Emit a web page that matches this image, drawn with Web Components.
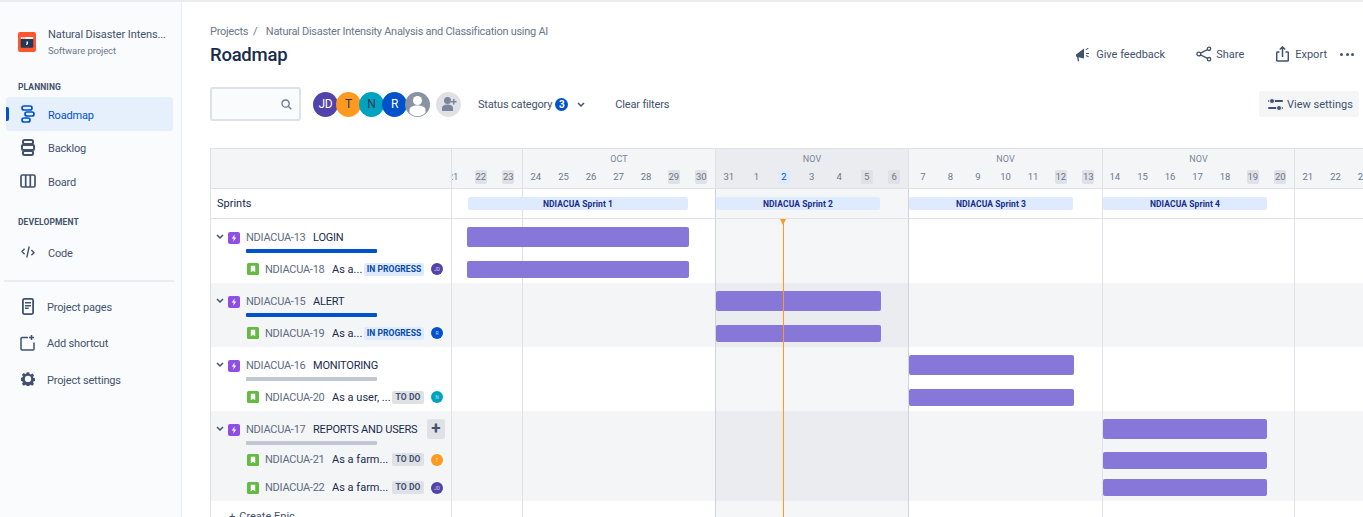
<!DOCTYPE html>
<html>
<head>
<meta charset="utf-8">
<title>Roadmap</title>
<style>
  html, body { margin: 0; height: 517px; overflow: hidden; background: #fff; }
  body { font-family: "Roboto", "Noto Sans", "Liberation Sans", sans-serif; font-size: 11px; color: #172b4d; }
</style>
</head>
<body>
<nd-app>
  <nd-sidebar slot="side"></nd-sidebar>
  <nd-page-header></nd-page-header>
  <nd-filter-bar></nd-filter-bar>
  <nd-roadmap>
    <nd-issue type="epic" key="NDIACUA-13" summary="LOGIN" progress="#0052cc" bar="15,222" h="34"></nd-issue>
    <nd-issue type="story" key="NDIACUA-18" summary="As a..." status="IN PROGRESS" who="JD|#5243aa" bar="15,222" h="30"></nd-issue>
    <nd-issue alt type="epic" key="NDIACUA-15" summary="ALERT" progress="#0052cc" bar="264,165" h="34"></nd-issue>
    <nd-issue alt type="story" key="NDIACUA-19" summary="As a..." status="IN PROGRESS" who="R|#0052cc" bar="264,165" h="30"></nd-issue>
    <nd-issue type="epic" key="NDIACUA-16" summary="MONITORING" progress="#c1c7d0" bar="457,165" h="34"></nd-issue>
    <nd-issue type="story" key="NDIACUA-20" summary="As a user, ..." status="TO DO" who="N|#00a3bf" bar="457,165" h="30"></nd-issue>
    <nd-issue alt add type="epic" key="NDIACUA-17" summary="REPORTS AND USERS" progress="#c1c7d0" bar="651,164" h="34"></nd-issue>
    <nd-issue alt type="story" key="NDIACUA-21" summary="As a farm..." status="TO DO" who="T|#ff991f" bar="651,164" h="27"></nd-issue>
    <nd-issue alt type="story" key="NDIACUA-22" summary="As a farm..." status="TO DO" who="JD|#5243aa" bar="651,164" h="29"></nd-issue>
  </nd-roadmap>
</nd-app>

<script>
const ICONS = {
  roadmap: `<svg width="14" height="18" viewBox="0 0 14 18" fill="none" stroke="currentColor" stroke-width="1.7"><rect x="1" y="1" width="10" height="4" rx="2"/><rect x="4" y="7" width="9" height="4" rx="2"/><rect x="1" y="13" width="8" height="4" rx="2"/></svg>`,
  backlog: `<svg width="14" height="17" viewBox="0 0 14 17" fill="none" stroke="currentColor" stroke-width="2"><rect x="2" y="1" width="10" height="4" rx="1.5"/><rect x="1" y="6" width="12" height="5" rx="1"/><rect x="2" y="12" width="10" height="4" rx="1.5"/></svg>`,
  board: `<svg width="16" height="14" viewBox="0 0 16 14" fill="none" stroke="currentColor" stroke-width="1.7"><rect x="1" y="1" width="14" height="12" rx="1.5"/><path d="M5.7 1v12M10.3 1v12"/></svg>`,
  code: `<svg width="14" height="14" viewBox="0 0 14 14" fill="none" stroke="currentColor" stroke-width="1.4"><path d="M3.6 3.8 1 6.6l2.6 2.6M10.4 5l2.6 2.7-2.6 2.5M8.2 1.5 5.8 12.5"/></svg>`,
  pages: `<svg width="12" height="17" viewBox="0 0 12 17"><rect x=".9" y=".9" width="10.2" height="15.2" rx="1.5" fill="none" stroke="currentColor" stroke-width="1.8"/><path d="M3 4h6v1.6H3zM3 7h6v1.4H3zM3 9.6h3.6V11H3z" fill="currentColor"/></svg>`,
  shortcut: `<svg width="15" height="16" viewBox="0 0 15 16" fill="none" stroke="currentColor" stroke-width="1.5"><path d="M8 2.4H2a1 1 0 0 0-1 1V14a1 1 0 0 0 1 1h11a1 1 0 0 0 1-1V7.5M11.5 0v5M9 2.5h5"/></svg>`,
  gear: `<svg width="14" height="14" viewBox="0 0 16 16"><path fill-rule="evenodd" fill="currentColor" d="M6.6.3h2.8l.4 2 1.3.6 1.8-1.100 2 2-1.100 1.800.6 1.300 2 .4v2.800l-2 .4-.6 1.300 1.100 1.800-2 2-1.800-1.100-1.300.6-.4 2H6.600l-.4-2-1.300-.6-1.800 1.100-2-2 1.100-1.800-.6-1.300-2-.4V6.700l2-.4.6-1.300-1.100-1.800 2-2 1.800 1.100 1.300-.6zM8 4.300a3.600 3.600 0 1 0 0 7.200 3.600 3.600 0 0 0 0-7.200z"/></svg>`,
  search: `<svg width="11" height="11" viewBox="0 0 11 11" fill="none" stroke="#6b778c" stroke-width="1.300"><circle cx="4.600" cy="4.600" r="3.600"/><path d="m7.300 7.300 3 3"/></svg>`,
  megaphone: `<svg width="15" height="17" viewBox="0 0 15 17" fill="#42526e"><path d="M1 8.500 9 2.500v10L3.500 11.200l.7 4H2.800L2 10.800 1 10.500z"/><path d="M10.500 3.500 13 1.800l.5.800-2.500 1.700zM11 7h3v1h-3zM10.800 10l.4-.9 2.600 1.200-.4.900z"/></svg>`,
  share: `<svg width="16" height="16" viewBox="0 0 16 16" fill="none" stroke="#42526e" stroke-width="1.300"><circle cx="2.800" cy="8" r="1.900"/><circle cx="13" cy="2.800" r="1.700"/><circle cx="13" cy="13.200" r="1.700"/><path d="M4.500 7.100 11.500 3.600M4.500 8.900l7 3.500"/></svg>`,
  exportBox: `<svg width="13" height="16" viewBox="0 0 13 16" fill="none" stroke="#42526e" stroke-width="1.500"><path d="M3.500 6H1.500a.8.8 0 0 0-.8.800v7.400a.8.800 0 0 0 .8.800h10a.8.8 0 0 0 .8-.8V6.800a.8.800 0 0 0-.8-.8h-2M6.500 11V1M3.800 3.500 6.500.9l2.700 2.600"/></svg>`,
  sliders: `<svg width="15" height="13" viewBox="0 0 15 13" fill="#42526e"><rect x="0" y="2" width="15" height="2" rx="1"/><rect x="0" y="9" width="15" height="2" rx="1"/><circle cx="4" cy="3" r="2.500" stroke="#f4f5f7"/><circle cx="11" cy="10" r="2.500" stroke="#f4f5f7"/></svg>`,
  chevron: `<svg width="8" height="6" viewBox="0 0 8 6" fill="none" stroke="currentColor" stroke-width="1.500"><path d="m1 1 3 3 3-3"/></svg>`,
  epic: `<svg width="12" height="12" viewBox="0 0 12 12"><rect width="12" height="12" rx="2" fill="#904ee2"/><path d="M6.800 2.300 3.800 6.600h2l-.6 3.100 3-4.300h-2z" fill="#fff"/></svg>`,
  story: `<svg width="12" height="12" viewBox="0 0 12 12"><rect width="12" height="12" rx="1.500" fill="#65ba43"/><path d="M3.800 2.800h4.400v6.400L6 7.700 3.800 9.200z" fill="#fff"/></svg>`,
  project: `<svg width="18" height="20" viewBox="0 0 18 20"><rect width="18" height="20" rx="2" fill="#ff5630"/><rect x="2.700" y="5" width="12.600" height="10.700" rx="1" fill="#253858"/><rect x="2.700" y="5" width="12.600" height="2" fill="#f4f5f7"/><path d="M4 5.500h1.500v1H4z" fill="#ff5630"/><path d="M6 5.500h1.500v1H6z" fill="#ffab00"/><path d="M8.500 9.500H10v3H8.500z" fill="#fff"/><path d="M8 12h1v1H8z" fill="#fff"/></svg>`,
  person: `<svg width="25" height="25" viewBox="0 0 25 25" style="flex:none"><circle cx="12.500" cy="12.500" r="12.500" fill="#8993a4"/><circle cx="12.500" cy="8.500" r="4.500" fill="#fff"/><path d="M4.500 18c0-3 3-4.500 8-4.500s8 1.500 8 4.500v2.700a11 11 0 0 1-16 0z" fill="#fff"/></svg>`,
  addPerson: `<svg width="16" height="16" viewBox="0 0 16 16" fill="#7a869a"><circle cx="6.500" cy="4.500" r="3.500"/><path d="M1 15v-3c0-2 2-3.500 5.500-3.500S12 10 12 12v3z"/><path d="M12 3h1.500v2H15.500v1.400h-2v2H12v-2h-2V5h2z"/></svg>`
};

class NdApp extends HTMLElement {
  constructor() {
    super();
    this.attachShadow({ mode: 'open' }).innerHTML = `
      <style>
        :host { display: flex; height: 515px; border-top: 2px solid #ebecf0; }
        .side { flex: none; width: 182px; display: block; }
        main { flex: 1; min-width: 0; display: flex; flex-direction: column; padding-left: 28px; }
      </style>
      <div class="side"><slot name="side"></slot></div>
      <main><slot></slot></main>
    `;
  }
}

class NdSidebar extends HTMLElement {
  constructor() {
    super();
    this.attachShadow({ mode: 'open' }).innerHTML = `
      <style>
        :host { display: block; width: 181px; height: 515px; background: #fafbfc; border-right: 1px solid #ebecf0; font-size: 11px; color: #42526e; }
        .project { display: flex; gap: 12px; align-items: center; padding: 22px 0 0 18px; height: 36px; }
        .name { font-size: 11px; letter-spacing: -.1px; line-height: 17px; white-space: nowrap; }
        .type { font-size: 9.500px; letter-spacing: -.1px; line-height: 15px; color: #6b778c; }
        h4 { margin: 0; padding-left: 18px; font-size: 8.500px; line-height: 12px; font-weight: 700; letter-spacing: .1px; color: #42526e; }
        .plan { margin-top: 21px; }
        nav { padding: 4px 8px 0 6px; }
        .slim { --item-h: 33.500px; }
        .dev { margin-top: 18px; }
        .code { padding-top: 7px; }
        hr { border: 0; height: 2px; background: #ebecf0; margin: 11px 7px 6px 4px; }
        .tall nd-nav-item { --item-h: 36.500px; --text-x: 41px; }
      </style>
      <div class="project">
        ${ICONS.project}
        <div><div class="name">Natural Disaster Intens...</div><div class="type">Software project</div></div>
      </div>
      <h4 class="plan">PLANNING</h4>
      <nav>
        <nd-nav-item icon="roadmap" active>Roadmap</nd-nav-item>
        <nd-nav-item class="slim" icon="backlog">Backlog</nd-nav-item>
        <nd-nav-item class="slim" icon="board">Board</nd-nav-item>
      </nav>
      <h4 class="dev">DEVELOPMENT</h4>
      <nav class="code"><nd-nav-item icon="code">Code</nd-nav-item></nav>
      <hr>
      <nav class="tall" style="padding-top:0">
        <nd-nav-item icon="pages">Project pages</nd-nav-item>
        <nd-nav-item icon="shortcut">Add shortcut</nd-nav-item>
        <nd-nav-item icon="gear">Project settings</nd-nav-item>
      </nav>
    `;
  }
}

class NdNavItem extends HTMLElement {
  constructor() {
    super();
    const active = this.hasAttribute('active');
    this.attachShadow({ mode: 'open' }).innerHTML = `
      <style>
        :host { display: flex; align-items: center; height: var(--item-h, 34px); border-radius: 3px; position: relative; letter-spacing: -.18px; color: ${active ? '#0052cc' : '#42526e'}; background: ${active ? '#e6effc' : 'none'}; }
        .ico { width: var(--text-x, 42px); display: flex; justify-content: center; padding-left: 2px; box-sizing: border-box; color: inherit; }
        .t { padding-top: 2px; }
        .bar { position: absolute; left: 0; top: 10px; width: 3px; height: 14px; background: #0052cc; border-radius: 0 2px 2px 0; }
      </style>
      ${active ? '<span class="bar"></span>' : ''}
      <span class="ico">${ICONS[this.getAttribute('icon')]}</span>
      <span class="t"><slot></slot></span>
    `;
  }
}

class NdPageHeader extends HTMLElement {
  constructor() {
    super();
    this.attachShadow({ mode: 'open' }).innerHTML = `
      <style>
        :host { display: flex; justify-content: space-between; align-items: flex-start; height: 72px; box-sizing: border-box; padding-top: 21px; flex: none; }
        .crumbs { font-size: 11px; line-height: 18px; color: #6b778c; letter-spacing: -.28px; }
        .crumbs i { font-style: normal; padding: 0 6px 0 5px; }
        h1 { margin: 1px 0 0; font-size: 18.500px; line-height: 27px; font-weight: 500; letter-spacing: -.25px; color: #172b4d; }
        .actions { display: flex; align-items: center; font-size: 11px; color: #42526e; padding: 0 9px 0 0; height: 24px; margin-top: 19px; }
        .actions span { display: flex; align-items: center; gap: 6px; white-space: nowrap; }
        .fb { margin-right: 31px; }
        .sh { margin-right: 32px; gap: 4px !important; }
        .ex { margin-right: 13px; }
        .dots { width: 14px; justify-content: space-between; gap: 0 !important; }
        .dots b { width: 3px; height: 3px; border-radius: 50%; background: #42526e; }
      </style>
      <div>
        <div class="crumbs">Projects<i>/</i> Natural Disaster Intensity Analysis and Classification using AI</div>
        <h1>Roadmap</h1>
      </div>
      <div class="actions">
        <span class="fb">${ICONS.megaphone}Give feedback</span>
        <span class="sh">${ICONS.share}Share</span>
        <span class="ex">${ICONS.exportBox}Export</span>
        <span class="dots"><b></b><b></b><b></b></span>
      </div>
    `;
  }
}

class NdAvatar extends HTMLElement {
  constructor() {
    super();
    this.attachShadow({ mode: 'open' }).innerHTML = `
      <style>
        :host { display: flex; align-items: center; justify-content: center; width: var(--size, 25px); height: var(--size, 25px); border-radius: 50%; flex: none; font-size: var(--fs, 12px); color: var(--fg, #fff); background: ${this.getAttribute('color')}; }
      </style>
      <slot></slot>
    `;
  }
}

class NdFilterBar extends HTMLElement {
  constructor() {
    super();
    this.attachShadow({ mode: 'open' }).innerHTML = `
      <style>
        :host { display: flex; align-items: center; height: 34px; margin-top: 13px; flex: none; font-size: 11px; letter-spacing: -.17px; color: #42526e; }
        .search { width: 91px; height: 34px; box-sizing: border-box; border: 2px solid #dfe1e6; border-radius: 3px; background: #fafbfc; display: flex; align-items: center; justify-content: flex-end; padding-right: 7px; }
        .team { display: flex; margin-left: 12px; }
        .team > * { margin-right: -2px; }
        .add { width: 25px; height: 25px; border-radius: 50%; background: #dfe1e6; display: flex; align-items: center; justify-content: center; margin-left: 8px; }
        .status { margin-left: 17px; display: flex; align-items: center; white-space: nowrap; padding-top: 1px; }
        .count { display: inline-flex; width: 13px; height: 13px; border-radius: 50%; background: #0052cc; color: #fff; font-size: 10px; align-items: center; justify-content: center; font-weight: 700; margin: 0 9px 0 3px; }
        .clear { margin-left: 30px; white-space: nowrap; padding-top: 1px; }
        .view { margin-left: auto; margin-right: 4px; width: 100px; height: 26px; box-sizing: border-box; background: #f4f5f7; border-radius: 3px; display: flex; align-items: center; gap: 4px; padding-left: 9px; white-space: nowrap; letter-spacing: 0; }
      </style>
      <div class="search">${ICONS.search}</div>
      <div class="team">
        <nd-avatar color="#5243aa">JD</nd-avatar>
        <nd-avatar color="#ff991f" style="--fg:#253858">T</nd-avatar>
        <nd-avatar color="#00a3bf" style="--fg:#253858">N</nd-avatar>
        <nd-avatar color="#0052cc">R</nd-avatar>
        ${ICONS.person}
      </div>
      <div class="add">${ICONS.addPerson}</div>
      <div class="status">Status category <span class="count">3</span>${ICONS.chevron}</div>
      <div class="clear">Clear filters</div>
      <div class="view">${ICONS.sliders}View settings</div>
    `;
  }
}

const GRID = 'linear-gradient(to right,' +
  ' transparent 70px, #dfe1e6 70px, #dfe1e6 71px, transparent 71px,' +
  ' transparent 263px, #cfd3dd 263px, #cfd3dd 264px, rgba(9,30,66,.045) 264px,' +
  ' rgba(9,30,66,.045) 456px, #cfd3dd 456px, #cfd3dd 457px, transparent 457px,' +
  ' transparent 650px, #dfe1e6 650px, #dfe1e6 651px, transparent 651px,' +
  ' transparent 842px, #dfe1e6 842px, #dfe1e6 843px, transparent 843px)';

class NdWeek extends HTMLElement {
  constructor() {
    super();
    const days = this.getAttribute('days').split(',');
    const marks = (this.getAttribute('marks') || '').split(',');
    const today = this.getAttribute('today');
    const cells = days.map(d => `<span class="d"><em class="${d == today ? 'today' : marks.includes(d) ? 'off' : ''}">${d}</em></span>`).join('');
    this.attachShadow({ mode: 'open' }).innerHTML = `
      <style>
        :host { display: block; flex: none; box-sizing: border-box; width: ${this.getAttribute('w')}px; height: 39px; border-right: 1px solid #dfe1e6; background: ${this.hasAttribute('now') ? '#ebecf0' : 'none'}; overflow: hidden; }
        .m { height: 21px; box-sizing: border-box; padding-top: 5px; line-height: 11px; font-size: 9px; letter-spacing: .1px; text-align: center; color: #7a869a; }
        .row { display: flex; justify-content: flex-end; width: ${this.getAttribute('cells') || 'auto'}; }
        .d { flex: none; width: 27.570px; display: flex; justify-content: center; }
        em { font-style: normal; font-size: 9.500px; line-height: 14px; min-width: 12px; text-align: center; border-radius: 2px; color: #6b778c; letter-spacing: -.1px; }
        .off { background: #dfe1e6; }
        .today { background: #deebff; color: #0052cc; }
      </style>
      <div class="m">${this.getAttribute('month') || ''}</div>
      <div class="row">${cells}</div>
    `;
  }
}

class NdSprint extends HTMLElement {
  constructor() {
    super();
    this.attachShadow({ mode: 'open' }).innerHTML = `
      <style>
        :host { position: absolute; top: 8px; height: 13px; left: ${this.getAttribute('x')}px; width: ${this.getAttribute('w')}px; background: #deebff; border-radius: 2px; display: flex; align-items: center; justify-content: center; font-size: 8.500px; letter-spacing: .1px; font-weight: 700; color: #172b8d; white-space: nowrap; }
      </style>
      <slot></slot>
    `;
  }
}

class NdRoadmap extends HTMLElement {
  constructor() {
    super();
    this.attachShadow({ mode: 'open' }).innerHTML = `
      <style>
        :host { display: block; position: relative; flex: 1; min-height: 0; margin-top: 27px; border-top: 1px solid #dfe1e6; border-left: 1px solid #dfe1e6; overflow: hidden; --grid: ${GRID}; }
        .head { display: flex; height: 39px; background: #f4f5f7; border-bottom: 1px solid #dfe1e6; overflow: hidden; }
        .corner { flex: none; width: 240px; border-right: 1px solid #dfe1e6; }
        .weeks { display: flex; flex: 1; overflow: hidden; min-width: 0; }
        .sprints { display: flex; height: 29px; border-bottom: 1px solid #dfe1e6; }
        .label { flex: none; width: 234px; padding: 1px 0 0 6px; height: 28px; border-right: 1px solid #dfe1e6; line-height: 28px; font-size: 11px; }
        .track { flex: 1; position: relative; background: var(--grid); }
        .create { display: flex; height: 30px; }
        .create .left { flex: none; width: 241px; border-right: 1px solid #dfe1e6; padding: 9px 0 0 18px; box-sizing: border-box; color: #42526e; font-size: 11px; }
        .create .left b { font-weight: 400; margin-right: 4px; }
        .today { position: absolute; left: 572px; top: 70px; bottom: 0; width: 1px; background: #ff991f; }
        .today::before { content: ""; position: absolute; left: -3px; top: 0; border: 3.500px solid transparent; border-top: 6px solid #ff991f; border-bottom: 0; }
      </style>
      <div class="head">
        <div class="corner"></div>
        <div class="weeks">
          <nd-week w="71" days="21,22,23" marks="22,23" cells="70px"></nd-week>
          <nd-week w="193" month="OCT" days="24,25,26,27,28,29,30" marks="29,30"></nd-week>
          <nd-week w="193" now month="NOV" days="31,1,2,3,4,5,6" marks="5,6" today="2"></nd-week>
          <nd-week w="194" month="NOV" days="7,8,9,10,11,12,13" marks="12,13"></nd-week>
          <nd-week w="192" month="NOV" days="14,15,16,17,18,19,20" marks="19,20"></nd-week>
          <nd-week w="193" days="21,22,23,24,25,26,27"></nd-week>
        </div>
      </div>
      <div class="sprints">
        <div class="label">Sprints</div>
        <div class="track">
          <nd-sprint x="16" w="220">NDIACUA Sprint 1</nd-sprint>
          <nd-sprint x="264" w="164">NDIACUA Sprint 2</nd-sprint>
          <nd-sprint x="457" w="164">NDIACUA Sprint 3</nd-sprint>
          <nd-sprint x="651" w="164">NDIACUA Sprint 4</nd-sprint>
        </div>
      </div>
      <slot></slot>
      <div class="create">
        <div class="left"><b>+</b>Create Epic</div>
        <div class="track"></div>
      </div>
      <div class="today"></div>
    `;
  }
}

class NdIssue extends HTMLElement {
  constructor() {
    super();
    const epic = this.getAttribute('type') == 'epic';
    const status = this.getAttribute('status');
    const [x, w] = this.getAttribute('bar').split(',');
    const h = +this.getAttribute('h');
    const who = (this.getAttribute('who') || '|').split('|');
    const lozenge = !status ? '' : `<span class="loz ${status == 'TO DO' ? 'todo' : 'prog'}">${status}</span>`;
    const left = epic ? `
        <span class="chev">${ICONS.chevron}</span>
        <span class="ico">${ICONS.epic}</span>
        <div class="ep">
          <div class="line"><span class="key">${this.getAttribute('key')}</span><span class="sum">${this.getAttribute('summary')}</span></div>
          <div class="prog-bar"></div>
        </div>
        ${this.hasAttribute('add') ? '<span class="plus">+</span>' : ''}
      ` : `
        <span class="ico st">${ICONS.story}</span>
        <span class="key">${this.getAttribute('key')}</span><span class="sum">${this.getAttribute('summary')}</span>
        ${lozenge}
        <nd-avatar color="${who[1]}" style="--size:12px;--fs:5px;--fg:rgba(255,255,255,.7);margin-left:7px;margin-right:8px">${who[0]}</nd-avatar>
      `;
    this.attachShadow({ mode: 'open' }).innerHTML = `
      <style>
        :host { display: flex; height: ${h}px; background: ${this.hasAttribute('alt') ? '#f4f5f7' : 'none'}; font-size: 11px; }
        .left { flex: none; width: 241px; box-sizing: border-box; border-right: 1px solid #dfe1e6; display: flex; align-items: ${epic ? 'flex-start' : 'center'}; white-space: nowrap; padding-left: ${epic ? 5 : 36}px; padding-top: ${epic ? 9 : 2}px; position: relative; }
        .chev { color: #42526e; width: 8px; display: flex; margin-right: 4px; margin-top: 6px; }
        .ico { display: flex; margin-top: 4px; margin-right: 6px; }
        .st { margin: 0 6px 0 0; }
        .key { color: #5e6c84; margin-right: 7.500px; letter-spacing: -.25px; }
        .sum { color: #172b4d; flex: 1; min-width: 0; letter-spacing: ${epic ? '-.2px' : '0'}; }
        .ep { flex: none; width: 131px; }
        .line { display: flex; line-height: 18px; white-space: nowrap; padding-top: 1px; }
        .prog-bar { height: 3.500px; margin-top: 2px; border-radius: 1px; background: ${this.getAttribute('progress') || 'none'}; }
        .loz { flex: none; height: 13px; line-height: 13px; border-radius: 2px; font-size: 8.500px; font-weight: 700; letter-spacing: .05px; text-align: center; }
        .prog { width: 60px; background: #deebff; color: #0747a6; }
        .todo { width: 32px; background: #dfe1e6; color: #42526e; }
        .plus { position: absolute; left: 216px; top: 8px; width: 18px; height: 20px; border-radius: 2px; background: #dfe1e6; color: #42526e; font-size: 17px; font-weight: 700; line-height: 19px; text-align: center; }
        .track { flex: 1; position: relative; background: var(--grid); }
        .gbar { position: absolute; left: ${x}px; width: ${w}px; top: ${h < 30 ? 7 : 8}px; height: ${epic ? 20 : 17}px; border-radius: 2px; background: #8777d9; }
      </style>
      <div class="left">${left}</div>
      <div class="track"><div class="gbar"></div></div>
    `;
  }
}

customElements.define('nd-app', NdApp);
customElements.define('nd-sidebar', NdSidebar);
customElements.define('nd-nav-item', NdNavItem);
customElements.define('nd-page-header', NdPageHeader);
customElements.define('nd-avatar', NdAvatar);
customElements.define('nd-filter-bar', NdFilterBar);
customElements.define('nd-week', NdWeek);
customElements.define('nd-sprint', NdSprint);
customElements.define('nd-roadmap', NdRoadmap);
customElements.define('nd-issue', NdIssue);
</script>
</body>
</html>
